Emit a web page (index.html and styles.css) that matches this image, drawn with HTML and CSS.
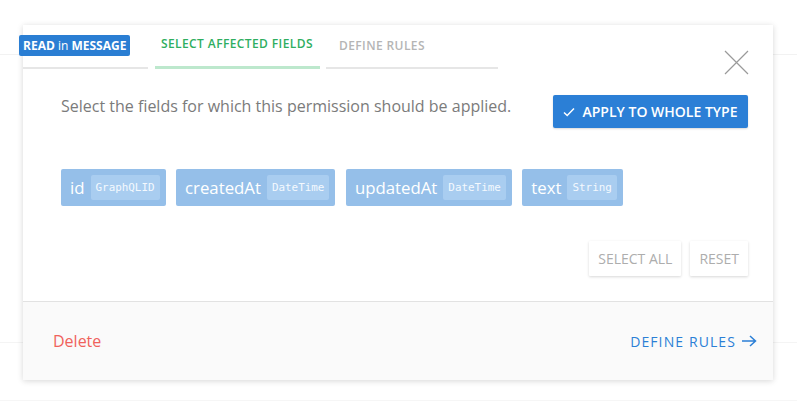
FILE: index.html
```html
<!DOCTYPE html>
<html>
<head>
<meta charset="utf-8">
<link rel="stylesheet" href="styles.css">
</head>
<body>
<div class="card">
  <div class="badge"><b>READ</b> in <b>MESSAGE</b></div>
  <svg class="close" width="25" height="25" viewBox="0 0 25 25"><path d="M1 1 L24 24 M24 1 L1 24" stroke="#9a9a9a" stroke-width="1.2" fill="none"/></svg>
  <div class="tabs">
    <div class="tab-spacer"></div>
    <div class="tab active">SELECT AFFECTED FIELDS</div>
    <div class="tab inactive">DEFINE RULES</div>
  </div>
  <div class="content">
    <div class="intro">
      <p class="lead">Select the fields for which this permission should be applied.</p>
      <button class="apply"><svg width="12" height="10" viewBox="0 0 12 10"><path d="M1 5.5 L4.2 8.5 L11 1.5" stroke="#fff" stroke-width="1.5" fill="none"/></svg>APPLY TO WHOLE TYPE</button>
    </div>
    <div class="chips">
      <div class="chip"><span class="name">id</span><span class="type">GraphQLID</span></div>
      <div class="chip"><span class="name">createdAt</span><span class="type">DateTime</span></div>
      <div class="chip"><span class="name">updatedAt</span><span class="type">DateTime</span></div>
      <div class="chip"><span class="name">text</span><span class="type">String</span></div>
    </div>
    <div class="actions">
      <button class="ghost">SELECT ALL</button>
      <button class="ghost">RESET</button>
    </div>
  </div>
  <div class="footer">
    <span class="delete">Delete</span>
    <span class="next">DEFINE RULES <svg width="16" height="12" viewBox="0 0 16 12"><path d="M1 6 H14 M9 1 L14.5 6 L9 11" stroke="#2b7fd6" stroke-width="1.5" fill="none"/></svg></span>
  </div>
</div>
</body>
</html>
```
FILE: styles.css
```css
html, body { margin: 0; padding: 0; }
body {
  width: 797px;
  height: 405px;
  overflow: hidden;
  font-family: "Open Sans", "Noto Sans", sans-serif;
  background:
    linear-gradient(#f2f2f2, #f2f2f2) 0 54px / 100% 1px no-repeat,
    linear-gradient(#f4f4f4, #f4f4f4) 0 342px / 100% 1px no-repeat,
    linear-gradient(#f6f6f6, #f6f6f6) 0 400px / 100% 1px no-repeat,
    #fff;
}
.card {
  position: relative;
  margin: 25px 0 0 23px;
  width: 750px;
  background: #fff;
  box-shadow: 0 1px 6px rgba(0, 0, 0, 0.16);
}
.badge {
  position: absolute;
  left: -4px;
  top: 10px;
  height: 21px;
  line-height: 21px;
  padding: 0 4px;
  background: #2a7ed3;
  color: #fff;
  font-size: 12px;
  border-radius: 2px;
  white-space: nowrap;
}
.badge b { font-weight: 700; }
.close {
  position: absolute;
  right: 24px;
  top: 25px;
}
.tabs {
  display: flex;
  align-items: flex-end;
  height: 44px;
}
.tab-spacer {
  width: 125px;
  border-bottom: 2px solid #e6e6e6;
  margin-right: 7px;
}
.tab {
  height: 42px;
  display: flex;
  align-items: center;
  font-size: 12px;
  letter-spacing: 0.4px;
  font-weight: 600;
  box-sizing: border-box;
  padding-bottom: 4px;
  white-space: nowrap;
}
.tab.active {
  width: 165px;
  padding-left: 6px;
  color: #2fae5f;
  border-bottom: 3px solid #bde8cd;
  margin-right: 6px;
  height: 43px;
  padding-bottom: 5px;
}
.tab.inactive {
  width: 172px;
  padding-left: 13px;
  color: #b5b5b5;
  border-bottom: 2px solid #e6e6e6;
}
.content {
  padding: 26px 25px 25px 38px;
}
.intro {
  display: flex;
  justify-content: space-between;
  align-items: flex-start;
}
.lead {
  margin: 0;
  font-size: 16px;
  line-height: 22px;
  color: #7b7b7b;
}
.apply {
  height: 33px;
  width: 195px;
  border: 0;
  border-radius: 2px;
  background: #2b7fd6;
  color: #fff;
  font-family: inherit;
  font-size: 14px;
  font-weight: 600;
  display: flex;
  align-items: center;
  justify-content: center;
  gap: 7px;
  box-shadow: 0 1px 2px rgba(0, 0, 0, 0.15);
  padding: 0;
}
.chips {
  display: flex;
  gap: 10.5px;
  margin-top: 41px;
}
.chip {
  height: 37px;
  display: flex;
  align-items: center;
  gap: 6px;
  padding: 0 6px 0 9px;
  background: #95bfe9;
  border-radius: 2px;
  color: #fff;
}
.chip .name {
  font-size: 16.8px;
}
.chip .type {
  height: 25px;
  line-height: 25px;
  padding: 0 5px;
  background: #a9cdf0;
  border-radius: 2px;
  font-family: "DejaVu Sans Mono", "Liberation Mono", monospace;
  font-size: 10.9px;
  color: #f4f9fe;
}
.actions {
  display: flex;
  justify-content: flex-end;
  gap: 9px;
  margin-top: 35px;
}
.ghost {
  height: 35px;
  padding: 0 9px;
  border: 0;
  background: #fff;
  color: #adadad;
  font-family: inherit;
  font-size: 14px;
  box-shadow: 0 1px 3px rgba(0, 0, 0, 0.16);
  border-radius: 1px;
}
.footer {
  height: 78px;
  border-top: 1px solid #e2e2e2;
  background: #fafafa;
  display: flex;
  align-items: center;
  justify-content: space-between;
  padding: 0 16px 0 30px;
}
.delete {
  color: #f0625c;
  font-size: 16px;
}
.next {
  color: #2b7fd6;
  font-size: 14px;
  letter-spacing: 1.1px;
  display: flex;
  align-items: center;
  gap: 5px;
}
```
